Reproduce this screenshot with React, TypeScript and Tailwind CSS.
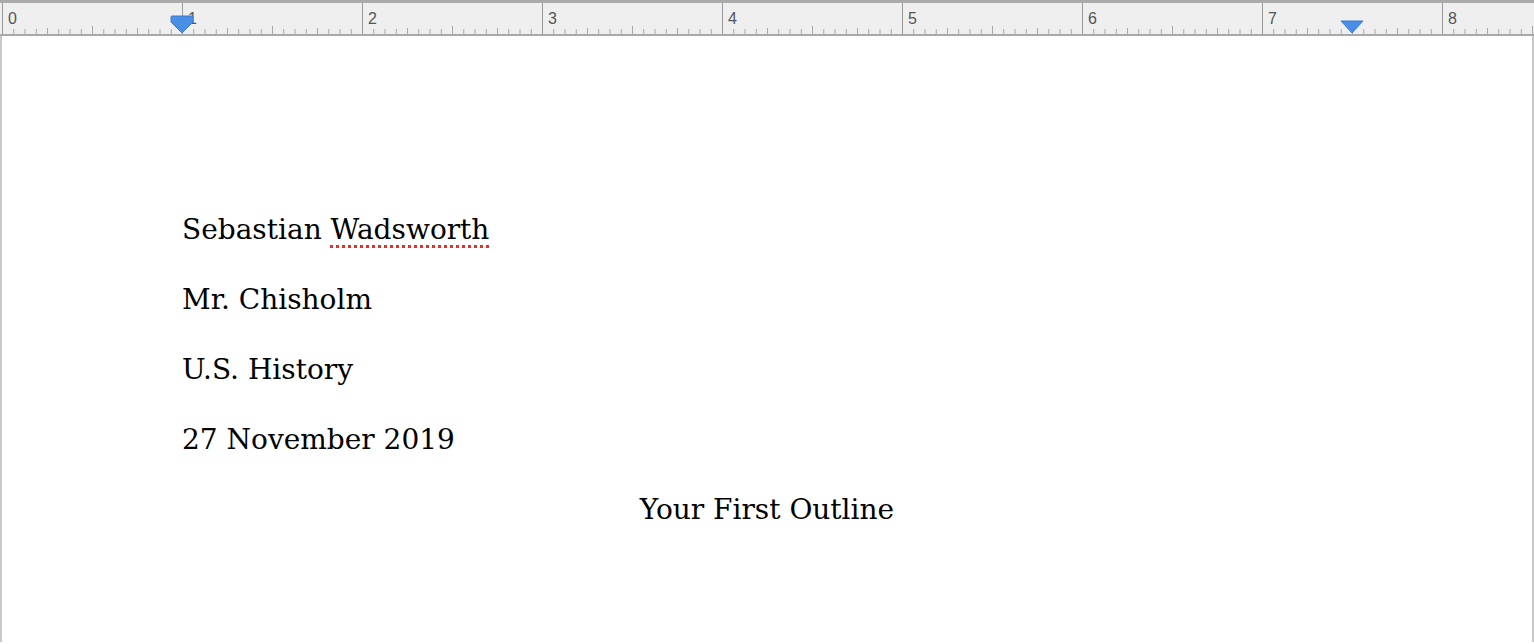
const INCH = 180;

function Ruler() {
  const ticks: JSX.Element[] = [];
  for (let i = 0; i <= 8 * 16 + 8; i++) {
    const x = 2 + (i * INCH) / 16;
    if (i % 16 === 0) {
      ticks.push(<line key={i} x1={x + 0.5} y1={3} x2={x + 0.5} y2={34} stroke="#9a9a9a" strokeWidth={1} />);
    } else {
      const h = i % 8 === 0 ? 8 : i % 4 === 0 ? 6 : 5;
      ticks.push(<line key={i} x1={x + 0.5} y1={34 - h} x2={x + 0.5} y2={34} stroke="#a8a8a8" strokeWidth={1} />);
    }
  }
  return (
    <div className="relative h-[36px] w-full border-t-[3px] border-b-2 border-[#a9a9a9] bg-[#efefef]">
      <svg className="absolute left-0 top-[-3px]" width={1534} height={36}>
        {ticks}
        {Array.from({ length: 9 }).map((_, k) => (
          <text key={k} x={2 + k * INCH + 6} y={24} fontSize={16} fill="#555" fontFamily="Liberation Sans, sans-serif">
            {k}
          </text>
        ))}
        <path d="M172 16 h20 a1 1 0 0 1 1 1 v5 l-11 11 l-11 -11 v-5 a1 1 0 0 1 1 -1z" fill="#4a8fe6" stroke="#3a7bd0" strokeWidth={1} />
        <path d="M1341 21 h22 l-11 12 z" fill="#4a8fe6" stroke="#3a7bd0" strokeWidth={1} />
      </svg>
    </div>
  );
}

export default function App() {
  return (
    <div className="h-[644px] w-[1534px] overflow-hidden bg-white">
      <Ruler />
      <div className="h-[606px] border-l-2 border-r-2 border-[#c8c8c8] pl-[180px] pr-[180px] pt-[159px] text-[28px] leading-[70px] text-black" style={{ fontFamily: 'Georgia, "DejaVu Serif", "Liberation Serif", serif' }}>
        <p>
          Sebastian{' '}
          <span className="underline decoration-dotted decoration-[#e5302a] decoration-[3px] underline-offset-[6px]">Wadsworth</span>
        </p>
        <p>Mr. Chisholm</p>
        <p>U.S. History</p>
        <p>27 November 2019</p>
        <p className="text-center">Your First Outline</p>
      </div>
    </div>
  );
}
